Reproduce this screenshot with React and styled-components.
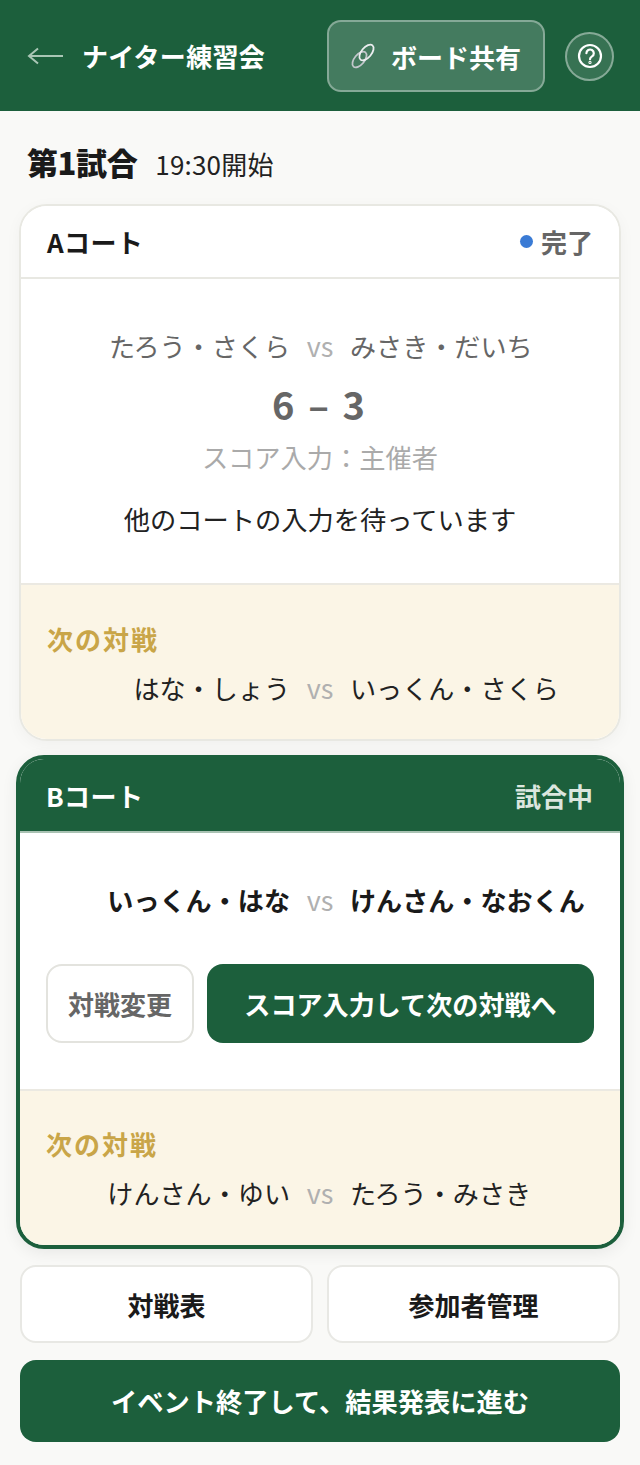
import React from 'react'
import styled, { createGlobalStyle } from 'styled-components'

const GREEN = '#1c5f3c'

const GlobalStyle = createGlobalStyle`
  * { box-sizing: border-box; }
  html, body {
    margin: 0;
    padding: 0;
    background: #f9f9f7;
    font-family: "Noto Sans CJK JP", "Noto Sans", sans-serif;
    color: #1a1a1a;
  }
`

const Page = styled.div`
  width: 640px;
  height: 1465px;
  overflow: hidden;
`

const Header = styled.header`
  height: 111px;
  padding: 20px 27px 19px 27px;
  background: ${GREEN};
  display: flex;
  align-items: center;
`

const Back = styled.span`
  width: 36px;
  display: flex;
  margin-right: 19px;
`

const EventName = styled.h1`
  margin: 0;
  flex: 1;
  font-size: 26px;
  line-height: 36px;
  font-weight: 700;
  letter-spacing: 0.3px;
  color: #fff;
`

const ShareButton = styled.div`
  width: 218px;
  height: 72px;
  border-radius: 14px;
  border: 2px solid rgba(255, 255, 255, 0.35);
  background: rgba(255, 255, 255, 0.18);
  display: flex;
  align-items: center;
  padding-left: 21px;
  gap: 15px;
  color: #fff;
  font-size: 26px;
  font-weight: 700;
`

const HelpButton = styled.div`
  width: 49px;
  height: 49px;
  margin-left: 20px;
  margin-right: -1px;
  border-radius: 50%;
  border: 2px solid rgba(255, 255, 255, 0.4);
  background: rgba(255, 255, 255, 0.12);
  display: flex;
  align-items: center;
  justify-content: center;
`

const Content = styled.main`
  padding: 0 19px;
  display: flex;
  flex-direction: column;
`

const RoundTitle = styled.div`
  height: 93px;
  padding: 28px 8px 0;
  display: flex;
  align-items: baseline;
  gap: 18px;
`

const RoundName = styled.h2`
  margin: 0;
  font-size: 31px;
  line-height: 46px;
  font-weight: 900;
  letter-spacing: -0.4px;
`

const RoundTime = styled.span`
  font-size: 26px;
  letter-spacing: 0.2px;
  color: #222;
`

const Card = styled.section`
  background: #fff;
  overflow: hidden;
  border-radius: 28px;
  border: ${(p) => (p.$active ? `4px solid ${GREEN}` : '2px solid #e8e8e2')};
  margin: ${(p) => (p.$active ? '14px -3px 16px' : '0')};
  height: ${(p) => (p.$active ? '494px' : '537px')};
  box-shadow: 0 4px 16px rgba(0, 0, 0, ${(p) => (p.$active ? 0.07 : 0.04)});
  display: flex;
  flex-direction: column;
`

const CardHead = styled.div`
  height: ${(p) => (p.$active ? '74px' : '73px')};
  padding: 0 ${(p) => (p.$active ? '27px 0 26px' : '26px')};
  display: flex;
  align-items: center;
  justify-content: space-between;
  background: ${(p) => (p.$active ? GREEN : '#fff')};
  color: ${(p) => (p.$active ? '#fff' : '#1a1a1a')};
  border-bottom: 2px solid ${(p) => (p.$active ? '#a9c2b3' : '#e8e8e2')};
  flex: none;
`

const CourtName = styled.span`
  font-size: 26px;
  font-weight: 700;
  letter-spacing: 0.4px;
`

const Status = styled.span`
  display: flex;
  align-items: center;
  gap: 8px;
  font-size: 26px;
  font-weight: 700;
  color: ${(p) => (p.$active ? '#dbe6df' : '#666')};
`

const Dot = styled.i`
  width: 13px;
  height: 13px;
  border-radius: 50%;
  background: #3a7bd5;
`

const Body = styled.div`
  flex: 1;
  padding: ${(p) => p.$top}px 26px 0;
  display: flex;
  flex-direction: column;
  align-items: center;
`

const Match = styled.div`
  width: 100%;
  display: grid;
  grid-template-columns: 1fr 60px 1fr;
  align-items: center;
  font-size: 26.1px;
  line-height: 38px;
  font-weight: ${(p) => (p.$strong ? 700 : 400)};
  color: ${(p) => p.$color || '#1a1a1a'};
`

const Left = styled.span`
  text-align: right;
  white-space: nowrap;
`

const Right = styled.span`
  text-align: left;
  white-space: nowrap;
`

const Vs = styled.span`
  text-align: center;
  font-size: 27px;
  font-weight: 400;
  color: #b0b0b0;
`

const Score = styled.div`
  margin-top: 5px;
  padding-right: 3px;
  font-size: 38px;
  line-height: 68px;
  font-weight: 700;
  color: #666;
  word-spacing: 5px;
`

const Scorer = styled.div`
  font-size: 26.25px;
  line-height: 38px;
  color: #aaa;
`

const Waiting = styled.div`
  margin-top: 24px;
  font-size: 26.25px;
  line-height: 38px;
  color: #222;
`

const Actions = styled.div`
  width: 100%;
  margin-top: 45px;
  display: flex;
  gap: 13px;
`

const ChangeButton = styled.div`
  width: 148px;
  height: 79px;
  border: 2px solid #e3e3de;
  border-radius: 16px;
  display: flex;
  align-items: center;
  justify-content: center;
  font-size: 26px;
  font-weight: 700;
  color: #666;
`

const ScoreButton = styled.div`
  flex: 1;
  height: 79px;
  border-radius: 16px;
  background: ${GREEN};
  display: flex;
  align-items: center;
  justify-content: center;
  font-size: 26.1px;
  font-weight: 700;
  color: #fff;
`

const Next = styled.div`
  height: 156px;
  flex: none;
  background: #fbf5e6;
  border-top: 2px solid #ebe9e2;
  padding: ${(p) => (p.$active ? 34 : 35)}px 26px 0;
`

const NextLabel = styled.div`
  font-size: 26px;
  line-height: 38px;
  font-weight: 700;
  letter-spacing: 2px;
  color: #c9a548;
  margin-bottom: 11px;
`

const SubButtons = styled.div`
  display: grid;
  grid-template-columns: 1fr 1fr;
  gap: 14px;
  padding: 0 1px;
`

const SubButton = styled.div`
  height: 78px;
  border: 2px solid #e8e8e4;
  border-radius: 16px;
  background: #fff;
  display: flex;
  align-items: center;
  justify-content: center;
  font-size: 26px;
  font-weight: 700;
`

const FinishButton = styled.div`
  height: 82px;
  margin: 17px 1px 0;
  border-radius: 16px;
  background: ${GREEN};
  display: flex;
  align-items: center;
  justify-content: center;
  color: #fff;
  font-size: 26.25px;
  font-weight: 700;
`

const Names = ({ left, right, strong, color }) => (
  <Match $strong={strong} $color={color}>
    <Left>{left}</Left>
    <Vs>vs</Vs>
    <Right>{right}</Right>
  </Match>
)

export default function App() {
  return (
    <Page>
      <GlobalStyle />
      <Header>
        <Back>
          <svg width="36" height="20" viewBox="0 0 36 20" fill="none" stroke="#a9c6b5" strokeWidth="2">
            <path d="M36 10H2M11 2.5 2 10l9 7.5" />
          </svg>
        </Back>
        <EventName>ナイター練習会</EventName>
        <ShareButton>
          <svg width="26" height="26" viewBox="0 0 26 26" fill="none" strokeWidth="1.8">
            <ellipse cx="9.5" cy="16.5" rx="5" ry="9.3" transform="rotate(40 9.5 16.5)" stroke="#c3c7cc" />
            <ellipse cx="16.5" cy="9.5" rx="5" ry="9.3" transform="rotate(40 16.5 9.5)" stroke="#eceef0" />
          </svg>
          ボード共有
        </ShareButton>
        <HelpButton>
          <svg width="26" height="26" viewBox="0 0 26 26" fill="none" stroke="#fff" strokeWidth="2.2" strokeLinecap="round">
            <circle cx="13" cy="13" r="11" />
            <path d="M9.4 10.2a3.7 3.7 0 1 1 5.6 3.2c-1.3.8-2 1.4-2 2.8" />
            <circle cx="13" cy="19.4" r=".5" />
          </svg>
        </HelpButton>
      </Header>
      <Content>
        <RoundTitle>
          <RoundName>第1試合</RoundName>
          <RoundTime>19:30開始</RoundTime>
        </RoundTitle>

        <Card>
          <CardHead>
            <CourtName>Aコート</CourtName>
            <Status>
              <Dot />
              完了
            </Status>
          </CardHead>
          <Body $top={48}>
            <Names left="たろう・さくら" right="みさき・だいち" color="#666" />
            <Score>6 – 3</Score>
            <Scorer>スコア入力：主催者</Scorer>
            <Waiting>他のコートの入力を待っています</Waiting>
          </Body>
          <Next>
            <NextLabel>次の対戦</NextLabel>
            <Names left="はな・しょう" right="いっくん・さくら" color="#222" />
          </Next>
        </Card>

        <Card $active>
          <CardHead $active>
            <CourtName>Bコート</CourtName>
            <Status $active>試合中</Status>
          </CardHead>
          <Body $top={48}>
            <Names left="いっくん・はな" right="けんさん・なおくん" strong />
            <Actions>
              <ChangeButton>対戦変更</ChangeButton>
              <ScoreButton>スコア入力して次の対戦へ</ScoreButton>
            </Actions>
          </Body>
          <Next $active>
            <NextLabel>次の対戦</NextLabel>
            <Names left="けんさん・ゆい" right="たろう・みさき" color="#222" />
          </Next>
        </Card>

        <SubButtons>
          <SubButton>対戦表</SubButton>
          <SubButton>参加者管理</SubButton>
        </SubButtons>
        <FinishButton>イベント終了して、結果発表に進む</FinishButton>
      </Content>
    </Page>
  )
}
